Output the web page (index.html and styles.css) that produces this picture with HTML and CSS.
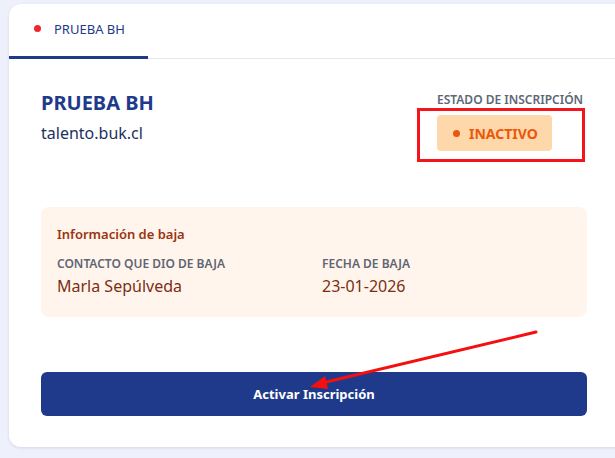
FILE: index.html
```html
<!DOCTYPE html>
<html lang="es">
<head>
<meta charset="utf-8">
<title>Inscripción</title>
<link rel="stylesheet" href="styles.css">
</head>
<body>
<div class="page">
  <section class="card">
    <nav class="tabs">
      <div class="tab active"><span class="tab-dot"></span><span class="tab-label">PRUEBA BH</span></div>
    </nav>
    <div class="card-body">
      <div class="header-row">
        <div class="company">
          <h1 class="company-name">PRUEBA BH</h1>
          <div class="company-domain">talento.buk.cl</div>
        </div>
        <div class="status">
          <div class="status-label">ESTADO DE INSCRIPCIÓN</div>
          <div class="badge"><span class="badge-dot"></span>INACTIVO</div>
        </div>
      </div>
      <div class="info-box">
        <div class="info-title">Información de baja</div>
        <div class="info-grid">
          <div class="info-item">
            <div class="info-label">CONTACTO QUE DIO DE BAJA</div>
            <div class="info-value">Marla Sepúlveda</div>
          </div>
          <div class="info-item">
            <div class="info-label">FECHA DE BAJA</div>
            <div class="info-value">23-01-2026</div>
          </div>
        </div>
      </div>
      <button class="primary-btn" type="button">Activar Inscripción</button>
    </div>
  </section>
  <div class="highlight-box"></div>
  <svg class="annotation-arrow" width="615" height="458" viewBox="0 0 615 458" xmlns="http://www.w3.org/2000/svg">
    <line x1="536" y1="332" x2="322" y2="383" stroke="#f50f0f" stroke-width="3" stroke-linecap="round"/>
    <polygon points="310,387 325,376 328,389" fill="#f50f0f"/>
  </svg>
</div>
</body>
</html>
```
FILE: styles.css
```css
* { box-sizing: border-box; }
html, body { margin: 0; padding: 0; }
body {
  background: #eef0fc;
  font-family: "Noto Sans", "Open Sans", sans-serif;
  overflow: hidden;
  width: 615px;
  height: 458px;
}
.page {
  position: relative;
  padding: 4px 0 0 9px;
  width: 615px;
  height: 458px;
}
.card {
  background: #ffffff;
  border-radius: 12px 0 0 12px;
  margin-right: -16px;
  box-shadow: 0 1px 3px rgba(30, 40, 90, 0.12);
}
.tabs {
  display: flex;
  border-bottom: 1px solid #e4e6f0;
}
.tab {
  display: flex;
  align-items: center;
  gap: 13px;
  width: 139px;
  height: 55px;
  padding: 0 0 3px 25px;
  border-bottom: 3px solid transparent;
  margin-bottom: -1px;
}
.tab.active { border-bottom-color: #1e3a8a; }
.tab-dot {
  width: 7px;
  height: 7px;
  border-radius: 50%;
  background: #f0262e;
}
.tab-label {
  font-size: 13px;
  color: #1e3a8a;
}
.card-body {
  padding: 32px 44px 31px 32px;
}
.header-row {
  display: flex;
  justify-content: space-between;
  align-items: flex-start;
}
.company-name {
  margin: 0;
  font-size: 20px;
  line-height: 24px;
  font-weight: 700;
  color: #1e3a8a;
}
.company-domain {
  margin-top: 6px;
  font-size: 16px;
  line-height: 24px;
  color: #22305e;
}
.status {
  display: flex;
  flex-direction: column;
  align-items: flex-start;
  margin-top: 1px;
  width: 150px;
}
.status-label {
  font-size: 12px;
  line-height: 16px;
  font-weight: 600;
  color: #5d6676;
}
.badge {
  margin-top: 7px;
  display: flex;
  align-items: center;
  gap: 9px;
  height: 36px;
  width: 115px;
  padding-left: 16px;
  border-radius: 4px;
  background: #fed7aa;
  color: #ea580c;
  font-size: 14px;
  font-weight: 700;
}
.badge-dot {
  width: 7px;
  height: 7px;
  border-radius: 50%;
  background: #ea580c;
}
.info-box {
  margin-top: 56px;
  background: #fff5ec;
  border-radius: 8px;
  padding: 17px 16px 19px 16px;
}
.info-title {
  font-size: 13px;
  line-height: 20px;
  font-weight: 600;
  color: #9a3412;
}
.info-grid {
  margin-top: 12px;
  display: grid;
  grid-template-columns: 1fr 1fr;
  column-gap: 16px;
}
.info-label {
  font-size: 12px;
  line-height: 16px;
  font-weight: 600;
  color: #5f6573;
}
.info-value {
  margin-top: 2px;
  font-size: 16px;
  line-height: 24px;
  color: #7c2d12;
}
.primary-btn {
  display: block;
  width: 100%;
  margin-top: 55px;
  height: 44px;
  border: 0;
  border-radius: 6px;
  background: #1f3a8a;
  color: #ffffff;
  font-family: inherit;
  font-size: 13px;
  font-weight: 700;
}
.highlight-box {
  position: absolute;
  left: 417px;
  top: 108px;
  width: 168px;
  height: 54px;
  border: 3px solid #f5141c;
}
.annotation-arrow {
  position: absolute;
  left: 0;
  top: 0;
  pointer-events: none;
}
```
